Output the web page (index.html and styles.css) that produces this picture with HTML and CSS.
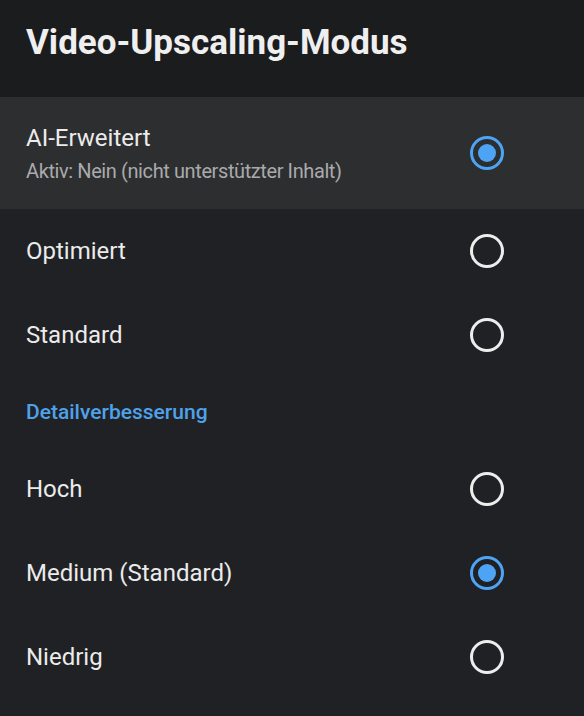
FILE: index.html
```html
<!DOCTYPE html>
<html lang="de">
<head>
    <meta charset="UTF-8">
    <meta name="viewport" content="width=device-width, initial-scale=1.0">
    <title>Video-Upscaling-Modus</title>
    <link rel="stylesheet" href="styles.css">
</head>
<body>
    <div class="panel">
        <header class="panel-header">
            <h1>Video-Upscaling-Modus</h1>
        </header>

        <ul class="options">
            <li class="option focused">
                <div class="option-text">
                    <span class="option-title">AI-Erweitert</span>
                    <span class="option-sub">Aktiv: Nein (nicht unterstützter Inhalt)</span>
                </div>
                <span class="radio checked"></span>
            </li>
            <li class="option">
                <div class="option-text">
                    <span class="option-title">Optimiert</span>
                </div>
                <span class="radio"></span>
            </li>
            <li class="option">
                <div class="option-text">
                    <span class="option-title">Standard</span>
                </div>
                <span class="radio"></span>
            </li>

            <li class="section-label">Detailverbesserung</li>

            <li class="option">
                <div class="option-text">
                    <span class="option-title">Hoch</span>
                </div>
                <span class="radio"></span>
            </li>
            <li class="option">
                <div class="option-text">
                    <span class="option-title">Medium (Standard)</span>
                </div>
                <span class="radio checked"></span>
            </li>
            <li class="option">
                <div class="option-text">
                    <span class="option-title">Niedrig</span>
                </div>
                <span class="radio"></span>
            </li>
        </ul>
    </div>
</body>
</html>
```

FILE: styles.css
```css
body {
    margin: 0;
    padding: 0;
    background-color: #202124;
    font-family: Roboto, "Liberation Sans", sans-serif;
    color: #e8eaed;
}

.panel {
    width: 584px;
    height: 716px;
    overflow: hidden;
    background: #202124;
}

.panel-header {
    height: 97px;
    background: #1b1c1e;
    display: flex;
    align-items: center;
    padding: 0 26px;
    box-sizing: border-box;
}

.panel-header h1 {
    margin: 0 0 12px 0;
    font-size: 35px;
    font-weight: 700;
    color: #efefef;
}

.options {
    list-style: none;
    margin: 0;
    padding: 0;
}

.option {
    height: 84px;
    display: flex;
    align-items: center;
    justify-content: space-between;
    padding: 0 80px 0 26px;
}

.option.focused {
    height: 112px;
    background: #2d2e30;
}

.option-text {
    display: flex;
    flex-direction: column;
    gap: 7px;
}

.option-title {
    font-size: 24px;
    color: #ebebeb;
}

.option-sub {
    font-size: 20px;
    letter-spacing: -0.4px;
    color: #a9aaac;
}

.radio {
    width: 34px;
    height: 34px;
    box-sizing: border-box;
    border: 3px solid #ededed;
    border-radius: 50%;
    position: relative;
}

.radio.checked {
    border-color: #4ea4f4;
}

.radio.checked::after {
    content: "";
    position: absolute;
    left: 5px;
    top: 5px;
    width: 18px;
    height: 18px;
    border-radius: 50%;
    background: #4ea4f4;
}

.section-label {
    height: 70px;
    display: flex;
    align-items: center;
    padding: 0 26px;
    font-size: 21px;
    font-weight: 500;
    color: #4fa2ea;
}
```
